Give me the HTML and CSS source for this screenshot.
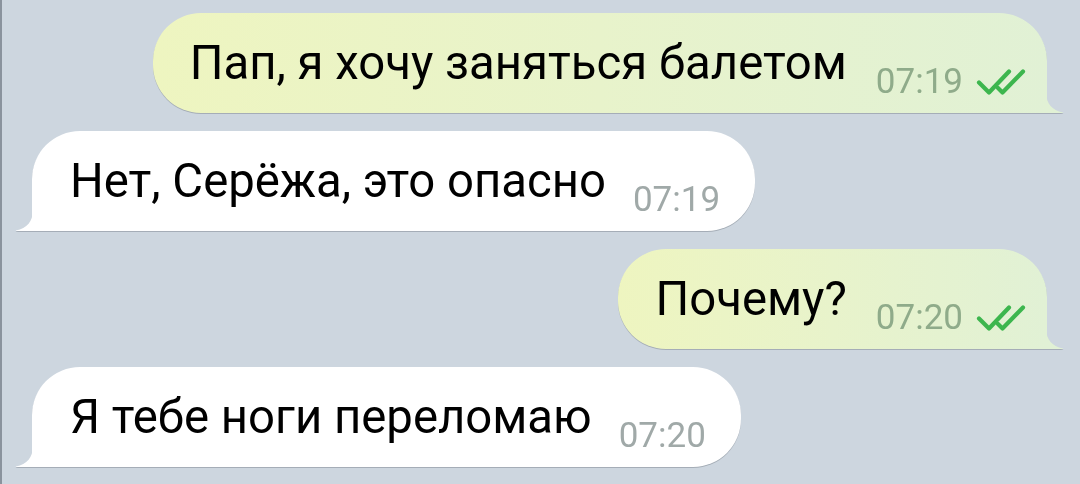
FILE: index.html
```html
<!DOCTYPE html>
<html lang="ru">
<head>
<meta charset="utf-8">
<link rel="stylesheet" href="styles.css">
</head>
<body>
<div class="chat">
  <div class="row out">
    <div class="bubble">
      <span class="text">Пап, я хочу заняться балетом</span>
      <span class="time">07:19</span>
      <svg class="checks" width="50" height="26" viewBox="0 0 50 26"><path d="M3 13.5 L13 23.5 L33 2.5 M22 19 L26.5 23.5 L47 2.5" fill="none" stroke="#3db64e" stroke-width="4.2" stroke-linecap="round" stroke-linejoin="round"/></svg>
      <svg class="tail" width="18" height="22" viewBox="0 0 18 22"><path d="M0 0 C0 13 6 19 17 21.5 Q18 22 16 22 L0 22 Z"/></svg>
    </div>
  </div>
  <div class="row in">
    <div class="bubble">
      <span class="text">Нет, Серёжа, это опасно</span>
      <span class="time">07:19</span>
      <svg class="tail" width="18" height="22" viewBox="0 0 18 22"><path d="M18 0 C18 13 12 19 1 21.5 Q0 22 2 22 L18 22 Z"/></svg>
    </div>
  </div>
  <div class="row out">
    <div class="bubble">
      <span class="text">Почему?</span>
      <span class="time">07:20</span>
      <svg class="checks" width="50" height="26" viewBox="0 0 50 26"><path d="M3 13.5 L13 23.5 L33 2.5 M22 19 L26.5 23.5 L47 2.5" fill="none" stroke="#3db64e" stroke-width="4.2" stroke-linecap="round" stroke-linejoin="round"/></svg>
      <svg class="tail" width="18" height="22" viewBox="0 0 18 22"><path d="M0 0 C0 13 6 19 17 21.5 Q18 22 16 22 L0 22 Z"/></svg>
    </div>
  </div>
  <div class="row in">
    <div class="bubble">
      <span class="text">Я тебе ноги переломаю</span>
      <span class="time">07:20</span>
      <svg class="tail" width="18" height="22" viewBox="0 0 18 22"><path d="M18 0 C18 13 12 19 1 21.5 Q0 22 2 22 L18 22 Z"/></svg>
    </div>
  </div>
</div>
</body>
</html>
```

FILE: styles.css
```css
html, body {
  margin: 0;
  padding: 0;
  height: 100%;
}
body {
  background: #cdd6df;
  font-family: Roboto, "Noto Sans", sans-serif;
  border-left: 2px solid #8a939d;
  box-sizing: border-box;
  overflow: hidden;
}
.chat {
  display: flex;
  flex-direction: column;
  gap: 18px;
  padding-top: 13px;
}
.row {
  display: flex;
}
.row.out {
  justify-content: flex-end;
  padding-right: 33px;
}
.row.in {
  justify-content: flex-start;
  padding-left: 30px;
}
.bubble {
  position: relative;
  height: 100px;
  box-sizing: border-box;
  display: flex;
  align-items: flex-end;
  padding-bottom: 14px;
  filter: drop-shadow(0 1.5px 0.6px rgba(60, 70, 80, 0.28));
}
.out .bubble {
  background: linear-gradient(90deg, #eef5c0 0%, #e8f3cb 50%, #e1f1d5 100%);
  border-radius: 48px 48px 0 48px;
  padding-left: 37px;
  padding-right: 21px;
}
.in .bubble {
  background: #ffffff;
  border-radius: 48px 48px 48px 0;
  padding-left: 38px;
  padding-right: 35px;
}
.text {
  font-size: 47.3px;
  line-height: 47px;
  color: #000;
  margin-bottom: 12px;
  white-space: nowrap;
}
.time {
  font-size: 35px;
  line-height: 35px;
  margin-left: 29px;
  white-space: nowrap;
}
.in .time {
  margin-left: 27px;
  color: #a0a9a8;
}
.out .time {
  color: #8fab8a;
}
.checks {
  display: block;
  margin-left: 13px;
  margin-bottom: 4px;
}
.tail {
  position: absolute;
  bottom: 0;
  display: block;
}
.out .tail {
  right: -17px;
  fill: #e1f1d5;
}
.in .tail {
  left: -17px;
  fill: #ffffff;
}
```
